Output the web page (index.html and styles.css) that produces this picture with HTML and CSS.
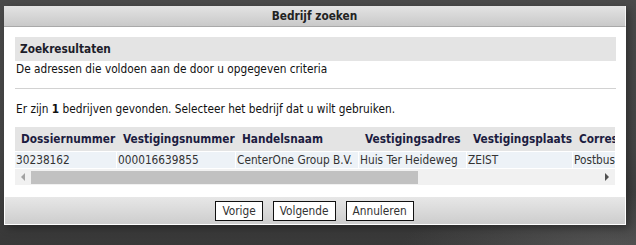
FILE: index.html
```html
<!DOCTYPE html>
<html lang="nl">
<head>
<meta charset="utf-8">
<title>Bedrijf zoeken</title>
<link rel="stylesheet" href="styles.css">
</head>
<body>
<div class="overlay">
  <div class="dialog">
    <div class="titlebar">Bedrijf zoeken</div>
    <div class="content">
      <div class="section-head">Zoekresultaten</div>
      <div class="desc">De adressen die voldoen aan de door u opgegeven criteria</div>
      <div class="rule"></div>
      <div class="found">Er zijn <b>1</b> bedrijven gevonden. Selecteer het bedrijf dat u wilt gebruiken.</div>
      <div class="grid-wrap">
        <div class="grid-clip">
          <table class="grid">
            <colgroup>
              <col class="c1"><col class="c2"><col class="c3"><col class="c4"><col class="c5"><col class="c6">
            </colgroup>
            <thead>
              <tr>
                <th>Dossiernummer</th>
                <th>Vestigingsnummer</th>
                <th>Handelsnaam</th>
                <th>Vestigingsadres</th>
                <th>Vestigingsplaats</th>
                <th>Correspondentieadres</th>
              </tr>
            </thead>
            <tbody>
              <tr>
                <td>30238162</td>
                <td>000016639855</td>
                <td>CenterOne Group B.V.</td>
                <td>Huis Ter Heideweg</td>
                <td>ZEIST</td>
                <td>Postbus 123</td>
              </tr>
            </tbody>
          </table>
        </div>
        <div class="hscroll">
          <div class="sb-btn"><span class="tri tri-left"></span></div>
          <div class="sb-track"><div class="sb-thumb"></div></div>
          <div class="sb-btn"><span class="tri tri-right"></span></div>
        </div>
      </div>
    </div>
    <div class="footer">
      <button class="btn">Vorige</button>
      <button class="btn">Volgende</button>
      <button class="btn">Annuleren</button>
    </div>
  </div>
</div>
</body>
</html>
```
FILE: styles.css
```css
html, body {
  margin: 0;
  padding: 0;
}
body {
  width: 636px;
  height: 245px;
  overflow: hidden;
  font-family: "DejaVu Sans Condensed", "DejaVu Sans", Verdana, sans-serif;
  font-size: 11.75px;
  color: #111;
}
.overlay {
  height: 245px;
  background:
    radial-gradient(ellipse 220px 60px at 620px 250px, rgba(110,110,110,0.5), rgba(110,110,110,0) 100%),
    linear-gradient(to bottom, #4a4a4a 0%, #454545 60%, #383838 100%);
  padding: 6px 0 0 4px;
  box-sizing: border-box;
}
.dialog {
  width: 622px;
  height: 219px;
  background: #fff;
  box-sizing: border-box;
  display: flex;
  flex-direction: column;
  box-shadow: 3px 3px 8px rgba(0,0,0,0.35);
}
.titlebar {
  height: 20px;
  line-height: 20px;
  flex: none;
  text-align: center;
  font-weight: bold;
  color: #222;
  background: linear-gradient(to bottom, #e3e3e3, #c9c9c9);
  border-bottom: 1px solid #a9a9a9;
  border-right: 1px solid #f4f4f4;
}
.content {
  flex: 1;
  padding: 10px 10px 0 11px;
}
.section-head {
  height: 24px;
  line-height: 24px;
  background: #e4e4e4;
  font-weight: bold;
  padding-left: 5px;
  color: #1d1d2a;
}
.desc {
  height: 17px;
  line-height: 17px;
  padding-left: 1px;
}
.rule {
  height: 1px;
  background: #d2d2d2;
  margin-top: 10px;
}
.found {
  height: 17px;
  line-height: 17px;
  margin-top: 12px;
  padding-left: 1px;
}
.grid-wrap {
  margin-top: 9px;
  width: 600px;
}
.grid-clip {
  width: 600px;
  overflow: hidden;
}
.grid {
  table-layout: fixed;
  width: 680px;
  border-collapse: separate;
  border-spacing: 0;
}
.c1 { width: 102px; }
.c2 { width: 119px; }
.c3 { width: 123px; }
.c4 { width: 108px; }
.c5 { width: 106px; }
.c6 { width: 122px; }
.grid th {
  height: 24px;
  padding: 0 0 0 6px;
  background: #e4e4e4;
  text-align: left;
  font-weight: bold;
  color: #1c1c40;
  white-space: nowrap;
  overflow: hidden;
}
.grid td {
  height: 16px;
  line-height: 16px;
  padding: 0 0 0 1px;
  background: #edf2f7;
  border-top: 1px solid #fff;
  border-right: 1px solid #fff;
  border-bottom: 1px solid #fff;
  color: #333;
  white-space: nowrap;
  overflow: hidden;
}
.hscroll {
  display: flex;
  height: 16px;
  background: #f1f1f1;
}
.sb-btn {
  width: 16px;
  flex: none;
  display: flex;
  align-items: center;
  justify-content: center;
}
.sb-track {
  flex: 1;
  display: flex;
  align-items: center;
}
.sb-thumb {
  width: 387px;
  height: 13px;
  background: #c1c1c1;
}
.tri {
  width: 0;
  height: 0;
  border-top: 4px solid transparent;
  border-bottom: 4px solid transparent;
}
.tri-left {
  border-right: 4px solid #a3a3a3;
}
.tri-right {
  border-left: 4px solid #505050;
}
.footer {
  flex: none;
  height: 27px;
  margin: 0 1px 1px 1px;
  background: linear-gradient(to bottom, #e7e7e7, #cdcdcd);
  display: flex;
  justify-content: center;
  align-items: center;
  gap: 10px;
  padding-right: 1px;
}
.btn {
  font-family: inherit;
  font-size: 11.75px;
  height: 20px;
  padding: 0 6px;
  background: #fff;
  border: 1px solid #111;
  color: #333;
  border-radius: 0;
  margin: 0;
}
```
